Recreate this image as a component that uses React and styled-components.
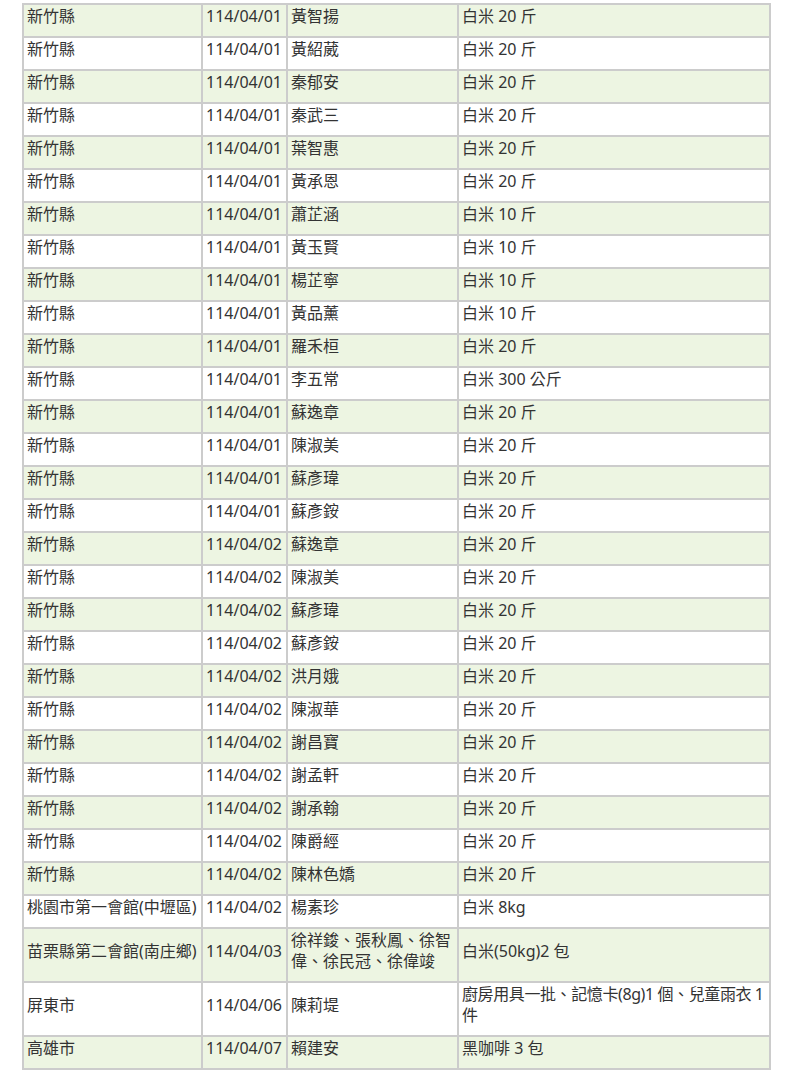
import React from "react";
import styled, { createGlobalStyle } from "styled-components";

const GlobalStyle = createGlobalStyle`
  html, body { margin: 0; padding: 0; background: #ffffff; }
  body { font-family: "Noto Sans", "Noto Sans CJK TC", sans-serif; }
`;

const Page = styled.div`
  padding: 3px 0 0 22px;
`;

const Table = styled.table`
  width: 749px;
  border-collapse: collapse;
  table-layout: fixed;
  font-size: 16px;
  line-height: 21px;
  color: #333333;
`;

const Col = styled.col`
  width: ${(p) => p.$w}px;
`;

const Row = styled.tr`
  background: ${(p) => (p.$shade ? "#edf5e2" : "#ffffff")};
`;

const Cell = styled.td`
  border: 2px solid #cccccc;
  padding: 1px 3px 9px 3px;
  vertical-align: middle;
  text-align: left;
  white-space: ${(p) => (p.$nowrap ? "nowrap" : "normal")};
  letter-spacing: ${(p) => (p.$tight ? "-0.4px" : "normal")};
`;

const base = [
  ["114/04/01", "黃智揚", "白米 20 斤"],
  ["114/04/01", "黃紹葳", "白米 20 斤"],
  ["114/04/01", "秦郁安", "白米 20 斤"],
  ["114/04/01", "秦武三", "白米 20 斤"],
  ["114/04/01", "葉智惠", "白米 20 斤"],
  ["114/04/01", "黃承恩", "白米 20 斤"],
  ["114/04/01", "蕭芷涵", "白米 10 斤"],
  ["114/04/01", "黃玉賢", "白米 10 斤"],
  ["114/04/01", "楊芷寧", "白米 10 斤"],
  ["114/04/01", "黃品薰", "白米 10 斤"],
  ["114/04/01", "羅禾桓", "白米 20 斤"],
  ["114/04/01", "李五常", "白米 300 公斤"],
  ["114/04/01", "蘇逸章", "白米 20 斤"],
  ["114/04/01", "陳淑美", "白米 20 斤"],
  ["114/04/01", "蘇彥瑋", "白米 20 斤"],
  ["114/04/01", "蘇彥銨", "白米 20 斤"],
  ["114/04/02", "蘇逸章", "白米 20 斤"],
  ["114/04/02", "陳淑美", "白米 20 斤"],
  ["114/04/02", "蘇彥瑋", "白米 20 斤"],
  ["114/04/02", "蘇彥銨", "白米 20 斤"],
  ["114/04/02", "洪月娥", "白米 20 斤"],
  ["114/04/02", "陳淑華", "白米 20 斤"],
  ["114/04/02", "謝昌寶", "白米 20 斤"],
  ["114/04/02", "謝孟軒", "白米 20 斤"],
  ["114/04/02", "謝承翰", "白米 20 斤"],
  ["114/04/02", "陳爵經", "白米 20 斤"],
  ["114/04/02", "陳林色嬌", "白米 20 斤"],
].map(([d, n, i]) => ["新竹縣", d, n, i]);

const rows = [
  ...base,
  ["桃園市第一會館(中壢區)", "114/04/02", "楊素珍", "白米 8kg"],
  ["苗栗縣第二會館(南庄鄉)", "114/04/03", "徐祥鋑、張秋鳳、徐智偉、徐民冠、徐偉竣", "白米(50kg)2 包"],
  ["屏東市", "114/04/06", "陳莉堤", "廚房用具一批、記憶卡(8g)1 個、兒童雨衣 1 件"],
  ["高雄市", "114/04/07", "賴建安", "黑咖啡 3 包"],
];

export default function App() {
  return (
    <>
      <GlobalStyle />
      <Page>
        <Table>
          <colgroup>
            <Col $w={179} />
            <Col $w={85} />
            <Col $w={171} />
            <Col $w={312} />
          </colgroup>
          <tbody>
            {rows.map((r, idx) => (
              <Row key={idx} $shade={idx % 2 === 0}>
                <Cell $nowrap>{r[0]}</Cell>
                <Cell $nowrap>{r[1]}</Cell>
                <Cell>{r[2]}</Cell>
                <Cell $tight={r[3].length > 20}>{r[3]}</Cell>
              </Row>
            ))}
          </tbody>
        </Table>
      </Page>
    </>
  );
}
